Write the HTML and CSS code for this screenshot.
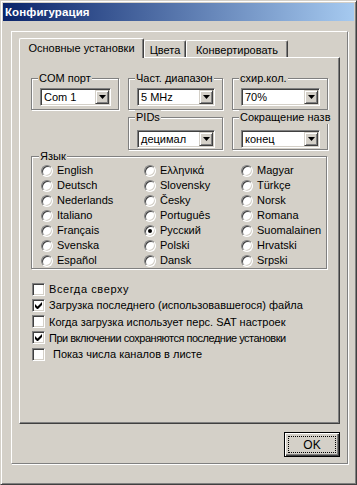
FILE: index.html
```html
<!DOCTYPE html>
<html lang="ru">
<head>
<meta charset="utf-8">
<title>Конфигурация</title>
<link rel="stylesheet" href="styles.css">
</head>
<body>
<div class="window">
  <div class="titlebar"><span class="title">Конфигурация</span></div>
  <div class="client">
    <div class="frame">
      <div class="tabs">
        <div class="tab active">Основные установки</div>
        <div class="tab t2">Цвета</div>
        <div class="tab t3">Конвертировать</div>
      </div>
      <div class="panel">
        <div class="combos">
          <div class="group g1 r1">
            <span class="legend">COM порт</span>
            <div class="combo"><span class="val">Com 1</span><span class="drop"><svg width="7" height="4" viewBox="0 0 7 4"><path d="M0 0h7L3.5 4z" fill="#000"/></svg></span></div>
          </div>
          <div class="group g2 r1">
            <span class="legend">Част. диапазон</span>
            <div class="combo"><span class="val">5 MHz</span><span class="drop"><svg width="7" height="4" viewBox="0 0 7 4"><path d="M0 0h7L3.5 4z" fill="#000"/></svg></span></div>
          </div>
          <div class="group g3 r1">
            <span class="legend">схир.кол.</span>
            <div class="combo"><span class="val">70%</span><span class="drop"><svg width="7" height="4" viewBox="0 0 7 4"><path d="M0 0h7L3.5 4z" fill="#000"/></svg></span></div>
          </div>
          <div class="group g2 r2">
            <span class="legend">PIDs</span>
            <div class="combo"><span class="val">децимал</span><span class="drop"><svg width="7" height="4" viewBox="0 0 7 4"><path d="M0 0h7L3.5 4z" fill="#000"/></svg></span></div>
          </div>
          <div class="group g3 r2">
            <span class="legend">Сокращение назв</span>
            <div class="combo"><span class="val">конец</span><span class="drop"><svg width="7" height="4" viewBox="0 0 7 4"><path d="M0 0h7L3.5 4z" fill="#000"/></svg></span></div>
          </div>
        </div>

        <div class="group lang">
          <span class="legend">Язык</span>
          <div class="radios">
            <label class="radio"><span class="rb"></span>English</label>
            <label class="radio"><span class="rb"></span>Ελληνικά</label>
            <label class="radio"><span class="rb"></span>Magyar</label>
            <label class="radio"><span class="rb"></span>Deutsch</label>
            <label class="radio"><span class="rb"></span>Slovensky</label>
            <label class="radio"><span class="rb"></span>Türkçe</label>
            <label class="radio"><span class="rb"></span>Nederlands</label>
            <label class="radio"><span class="rb"></span>Česky</label>
            <label class="radio"><span class="rb"></span>Norsk</label>
            <label class="radio"><span class="rb"></span>Italiano</label>
            <label class="radio"><span class="rb"></span>Português</label>
            <label class="radio"><span class="rb"></span>Romana</label>
            <label class="radio"><span class="rb"></span>Français</label>
            <label class="radio"><span class="rb on"></span>Русский</label>
            <label class="radio"><span class="rb"></span>Suomalainen</label>
            <label class="radio"><span class="rb"></span>Svenska</label>
            <label class="radio"><span class="rb"></span>Polski</label>
            <label class="radio"><span class="rb"></span>Hrvatski</label>
            <label class="radio"><span class="rb"></span>Español</label>
            <label class="radio"><span class="rb"></span>Dansk</label>
            <label class="radio"><span class="rb"></span>Srpski</label>
          </div>
        </div>

        <div class="checks">
          <label class="check wide"><span class="cb"></span>Всегда сверху</label>
          <label class="check"><span class="cb"><svg width="7" height="7" viewBox="0 0 7 7"><path d="M0 2v3l2 2h1l4-4V0L2.5 4.5z" fill="#000"/></svg></span>Загрузка последнего (использовавшегося) файла</label>
          <label class="check"><span class="cb"></span>Когда загрузка использует перс. SAT настроек</label>
          <label class="check tight"><span class="cb"><svg width="7" height="7" viewBox="0 0 7 7"><path d="M0 2v3l2 2h1l4-4V0L2.5 4.5z" fill="#000"/></svg></span>При включении сохраняются последние установки</label>
          <label class="check last"><span class="cb"></span>Показ числа каналов в листе</label>
        </div>
      </div>
      <div class="buttons">
        <button class="ok" type="button"><span class="focus">OK</span></button>
      </div>
    </div>
  </div>
</div>
</body>
</html>
```

FILE: styles.css
```css
* { box-sizing: border-box; }
html, body { margin: 0; padding: 0; background: #d4d0c8; }
body {
  font-family: "Liberation Sans", Arial, sans-serif;
  font-size: 11px;
  color: #000;
}
.window {
  width: 357px;
  height: 485px;
  background: #d4d0c8;
  border: 1px solid;
  border-color: #d4d0c8 #404040 #404040 #d4d0c8;
  box-shadow: inset 1px 1px 0 #fff, inset -1px -1px 0 #808080;
  padding: 2px;
}
.titlebar {
  height: 18px;
  background: linear-gradient(to right, #0a246a, #a6caf0);
  display: flex;
  align-items: center;
  padding-left: 2px;
}
.title {
  color: #fff;
  font-weight: bold;
  font-size: 11.5px;
  line-height: 14px;
  letter-spacing: 0.1px;
}
.client { padding: 10px 0 0 8px; }
.frame {
  width: 337px;
  height: 433px;
  border: 1px solid;
  border-color: #fff #808080 #808080 #fff;
  box-shadow: 1px 1px 0 #fff;
  padding: 6px 7px 6px 7px;
}
.tabs {
  display: flex;
  align-items: flex-end;
  height: 19px;
}
.tab {
  height: 17px;
  background: #d4d0c8;
  border-top: 1px solid #fff;
  border-left: 1px solid #fff;
  border-right: 1px solid #404040;
  box-shadow: inset -1px 0 0 #808080;
  border-radius: 2px 2px 0 0;
  padding: 2px 0 0 0;
  line-height: 14px;
  text-align: center;
  white-space: nowrap;
}
.tab.active {
  height: 20px;
  width: 125px;
  margin-bottom: -1px;
  position: relative;
  z-index: 1;
  padding-top: 2px;
}
.t2 { width: 42px; }
.t3 { width: 102px; }
.panel {
  width: 321px;
  height: 367px;
  border: 1px solid;
  border-color: #fff #404040 #404040 #fff;
  box-shadow: inset -1px -1px 0 #808080;
  padding: 20px 0 0 11px;
}
.combos {
  display: grid;
  grid-template-columns: 88px 95px 96px;
  grid-template-rows: 32px 33px;
  column-gap: 9px;
  row-gap: 7px;
}
.group {
  position: relative;
  border: 1px solid #808080;
  box-shadow: inset 1px 1px 0 #fff, 1px 1px 0 #fff;
}
.g1 { grid-column: 1; }
.g2 { grid-column: 2; }
.g3 { grid-column: 3; }
.r1 { grid-row: 1; padding: 9px 7px 0 8px; }
.r2 { grid-row: 2; padding: 12px 7px 0 8px; }
.legend {
  position: absolute;
  top: -8px;
  left: 6px;
  background: #d4d0c8;
  padding: 0 1px;
  line-height: 14px;
  white-space: nowrap;
}
.combo {
  height: 18px;
  background: #fff;
  border: 1px solid;
  border-color: #808080 #fff #fff #808080;
  box-shadow: inset 1px 1px 0 #404040, inset -1px -1px 0 #d4d0c8;
  display: flex;
  align-items: center;
  padding: 1px 1px 1px 3px;
}
.val { flex: 1; line-height: 14px; }
.drop {
  width: 14px;
  height: 14px;
  background: #d4d0c8;
  border: 1px solid;
  border-color: #d4d0c8 #404040 #404040 #d4d0c8;
  box-shadow: inset 1px 1px 0 #fff, inset -1px -1px 0 #808080;
  display: flex;
  align-items: center;
  justify-content: center;
}
.drop svg { display: block; }
.lang {
  width: 296px;
  height: 113px;
  margin-top: 6px;
  padding: 6px 0 0 9px;
}
.lang .legend { left: 7px; }
.radios {
  display: grid;
  grid-template-columns: 103px 97px 1fr;
  grid-auto-rows: 15px;
}
.radio {
  display: flex;
  align-items: center;
  line-height: 15px;
  white-space: nowrap;
}
.rb {
  width: 12px;
  height: 12px;
  flex: none;
  border-radius: 50%;
  background: #fff;
  border: 1px solid;
  border-color: #808080 #fff #fff #808080;
  box-shadow: inset 1px 1px 0 #404040, inset -1px -1px 0 #d4d0c8;
  margin-right: 4px;
  display: flex;
  align-items: center;
  justify-content: center;
}
.rb.on::after {
  content: "";
  width: 4px;
  height: 4px;
  border-radius: 50%;
  background: #000;
}
.checks {
  margin-top: 12px;
  padding-left: 1px;
  display: flex;
  flex-direction: column;
  gap: 0.25px;
}
.check {
  height: 16px;
  display: flex;
  align-items: center;
  white-space: nowrap;
}
.check.wide { letter-spacing: 0.6px; }
.check.tight { letter-spacing: -0.5px; }
.cb {
  width: 13px;
  height: 13px;
  flex: none;
  background: #fff;
  border: 1px solid;
  border-color: #808080 #fff #fff #808080;
  box-shadow: inset 1px 1px 0 #404040, inset -1px -1px 0 #d4d0c8;
  margin-right: 4px;
  display: flex;
  align-items: center;
  justify-content: center;
}
.cb svg { display: block; }
.check.last .cb { margin-right: 8px; }
.buttons {
  display: flex;
  justify-content: flex-end;
  margin-top: 8px;
}
.ok {
  width: 56px;
  height: 25px;
  margin: 0;
  padding: 0;
  font: inherit;
  font-size: 12px;
  color: #000;
  background: #d4d0c8;
  border: 1px solid #000;
  box-shadow: inset 1px 1px 0 #fff, inset -1px -1px 0 #404040, inset -2px -2px 0 #808080;
  display: flex;
  align-items: stretch;
  justify-content: stretch;
}
.focus {
  flex: 1;
  margin: 3px;
  border: 1px dotted #000;
  display: flex;
  align-items: center;
  justify-content: center;
  line-height: 14px;
}
```
